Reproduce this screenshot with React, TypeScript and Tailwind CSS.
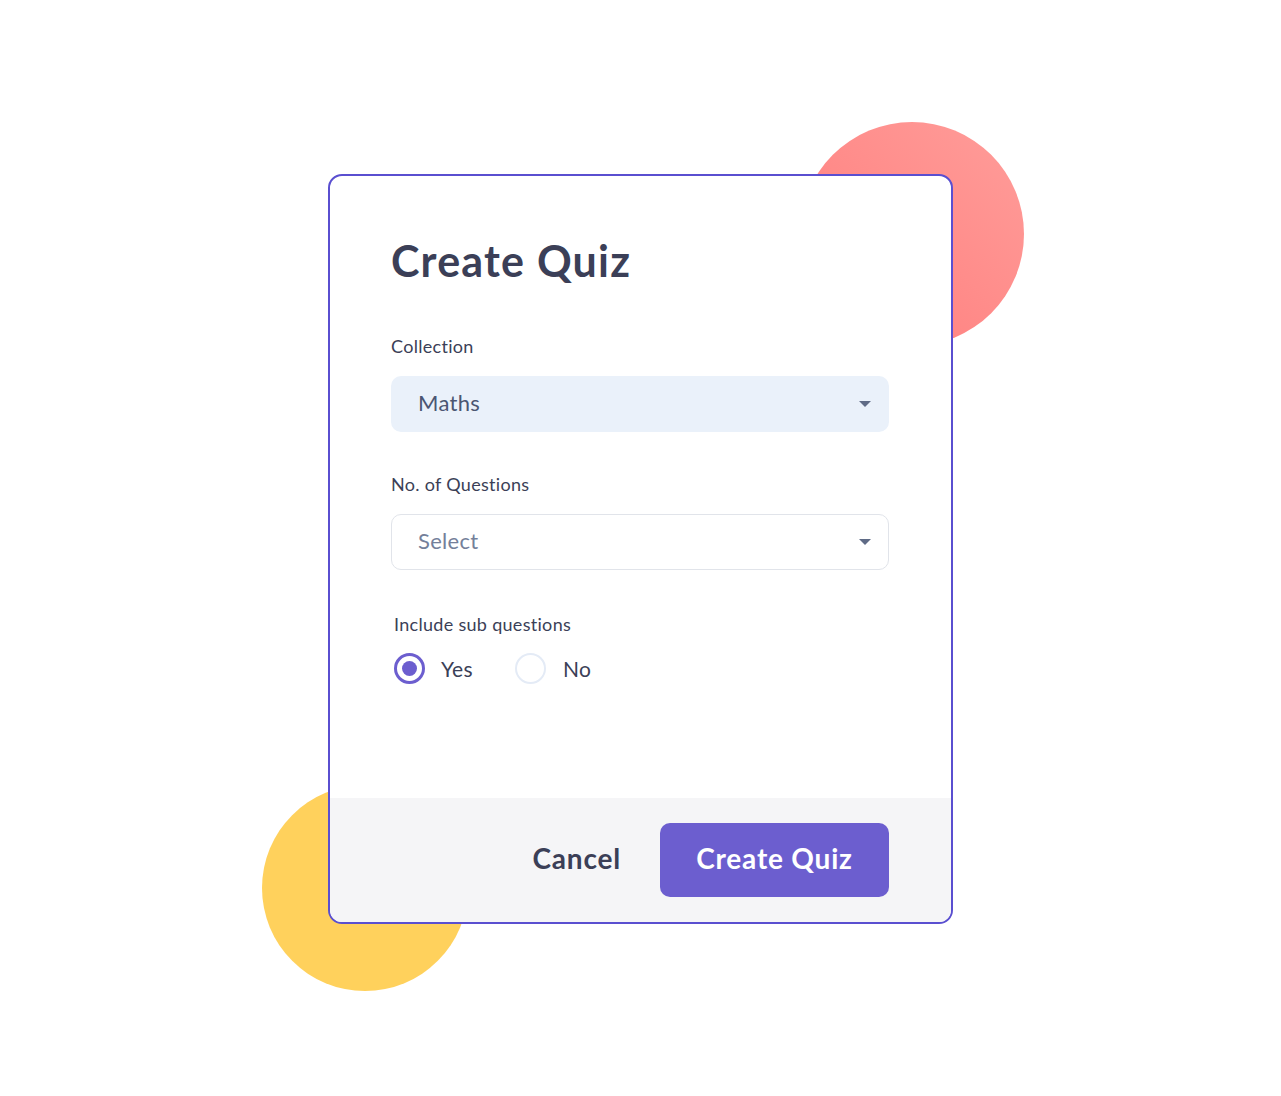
import React from "react";

function Caret() {
  return (
    <svg width="14" height="8" viewBox="0 0 14 8" className="shrink-0">
      <path d="M1 1 L13 1 L7 7 Z" fill="#5f6b86" />
    </svg>
  );
}

export default function App() {
  return (
    <div className="min-h-[1096px] w-full bg-white" style={{ fontFamily: "Lato, 'Open Sans', sans-serif" }}>
      <div className="pt-[174px]">
        <div className="relative ml-[328px] w-[625px]">
          <div className="absolute left-[472px] top-[-52px] h-[224px] w-[224px] rounded-full bg-gradient-to-bl from-[#ff9d9a] to-[#ff7a7a]" />
          <div className="absolute left-[-66px] top-[611px] h-[206px] w-[206px] rounded-full bg-[#ffd15c]" />
          <div className="relative overflow-hidden rounded-[14px] border-2 border-[#5a4fd0] bg-white">
            <div className="pl-[61px] pr-[62px] pt-[55px] pb-[113px]">
              <h1 className="text-[43px] font-bold leading-[60px] tracking-[1.2px] text-[#3b3f57]">Create Quiz</h1>
              <div className="mt-[43px] text-[18px] leading-[24px] tracking-[0.3px] text-[#3b3f57]">Collection</div>
              <div className="mt-[18px] flex h-[56px] items-center justify-between rounded-[10px] bg-[#eaf1fa] pl-[27px] pr-[17px]">
                <span className="-mt-[3px] text-[22px] tracking-[0.3px] text-[#4b5672]">Maths</span>
                <Caret />
              </div>
              <div className="mt-[40px] text-[18px] leading-[24px] tracking-[0.3px] text-[#3b3f57]">No. of Questions</div>
              <div className="mt-[18px] flex h-[56px] items-center justify-between rounded-[10px] border border-[#e1e4ea] bg-white pl-[26px] pr-[16px]">
                <span className="-mt-[3px] text-[22px] tracking-[0.3px] text-[#74809a]">Select</span>
                <Caret />
              </div>
              <div className="mt-[42px] pl-[3px] text-[18px] leading-[24px] tracking-[0.3px] text-[#3b3f57]">Include sub questions</div>
              <div className="mt-[17px] flex items-center pl-[3px]">
                <div className="flex h-[31px] w-[31px] items-center justify-center rounded-full border-[3px] border-[#6c5ecf]">
                  <div className="h-[15px] w-[15px] rounded-full bg-[#6c5ecf]" />
                </div>
                <span className="ml-[16px] text-[21px] tracking-[0.3px] text-[#3b3f57]">Yes</span>
                <div className="ml-[42px] h-[31px] w-[31px] rounded-full border-2 border-[#e4ebf6]" />
                <span className="ml-[17px] text-[21px] tracking-[0.3px] text-[#3b3f57]">No</span>
              </div>
            </div>
            <div className="flex h-[124px] items-start justify-end bg-[#f5f5f7] pl-[61px] pr-[62px] pt-[25px]">
              <div className="flex items-center gap-[39px]">
                <span className="-mt-[3px] text-[28px] font-bold tracking-[0.8px] text-[#3b3f57]">Cancel</span>
                <button className="flex h-[74px] w-[229px] items-center justify-center rounded-[10px] bg-[#6c5ecf] pb-[3px] text-[28px] font-bold tracking-[0.8px] text-white">
                  Create Quiz
                </button>
              </div>
            </div>
          </div>
        </div>
      </div>
    </div>
  );
}
